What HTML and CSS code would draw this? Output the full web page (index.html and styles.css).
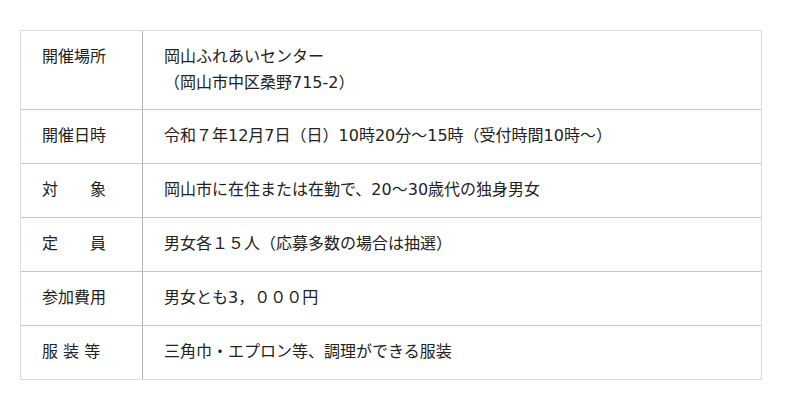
FILE: index.html
```html
<!DOCTYPE html>
<html>
<head>
<meta charset="utf-8">
<link rel="stylesheet" href="styles.css">
</head>
<body>
<table class="info">
  <tbody>
    <tr class="multi">
      <th class="label">開催場所</th>
      <td class="value">岡山ふれあいセンター<br>（岡山市中区桑野715-2）</td>
    </tr>
    <tr>
      <th class="label">開催日時</th>
      <td class="value">令和７年12月7日（日）10時20分～15時（受付時間10時～）</td>
    </tr>
    <tr>
      <th class="label">対　　象</th>
      <td class="value">岡山市に在住または在勤で、20～30歳代の独身男女</td>
    </tr>
    <tr>
      <th class="label">定　　員</th>
      <td class="value">男女各１５人（応募多数の場合は抽選）</td>
    </tr>
    <tr>
      <th class="label">参加費用</th>
      <td class="value">男女とも3，０００円</td>
    </tr>
    <tr>
      <th class="label">服 装 等</th>
      <td class="value">三角巾・エプロン等、調理ができる服装</td>
    </tr>
  </tbody>
</table>
</body>
</html>
```

FILE: styles.css
```css
html, body {
  margin: 0;
  padding: 0;
  background: #ffffff;
}

body {
  font-family: "DejaVu Sans", "Noto Sans CJK JP", sans-serif;
  font-size: 16px;
  color: #222222;
  text-spacing-trim: space-all;
}

.info {
  margin: 30px 0 0 20px;
  width: 742px;
  border: 1px solid #dcdcdc;
  border-spacing: 0;
  border-collapse: separate;
}

.info th,
.info td {
  padding: 13px 21px 14px;
  line-height: 26px;
  text-align: left;
  vertical-align: top;
  font-weight: normal;
}

.info .multi th,
.info .multi td {
  padding-bottom: 13px;
}

.info tr + tr th,
.info tr + tr td {
  border-top: 1px solid #c6c6c6;
}

.label {
  width: 79px;
  border-right: 1px solid #b4b4b4;
  white-space: nowrap;
}
```
